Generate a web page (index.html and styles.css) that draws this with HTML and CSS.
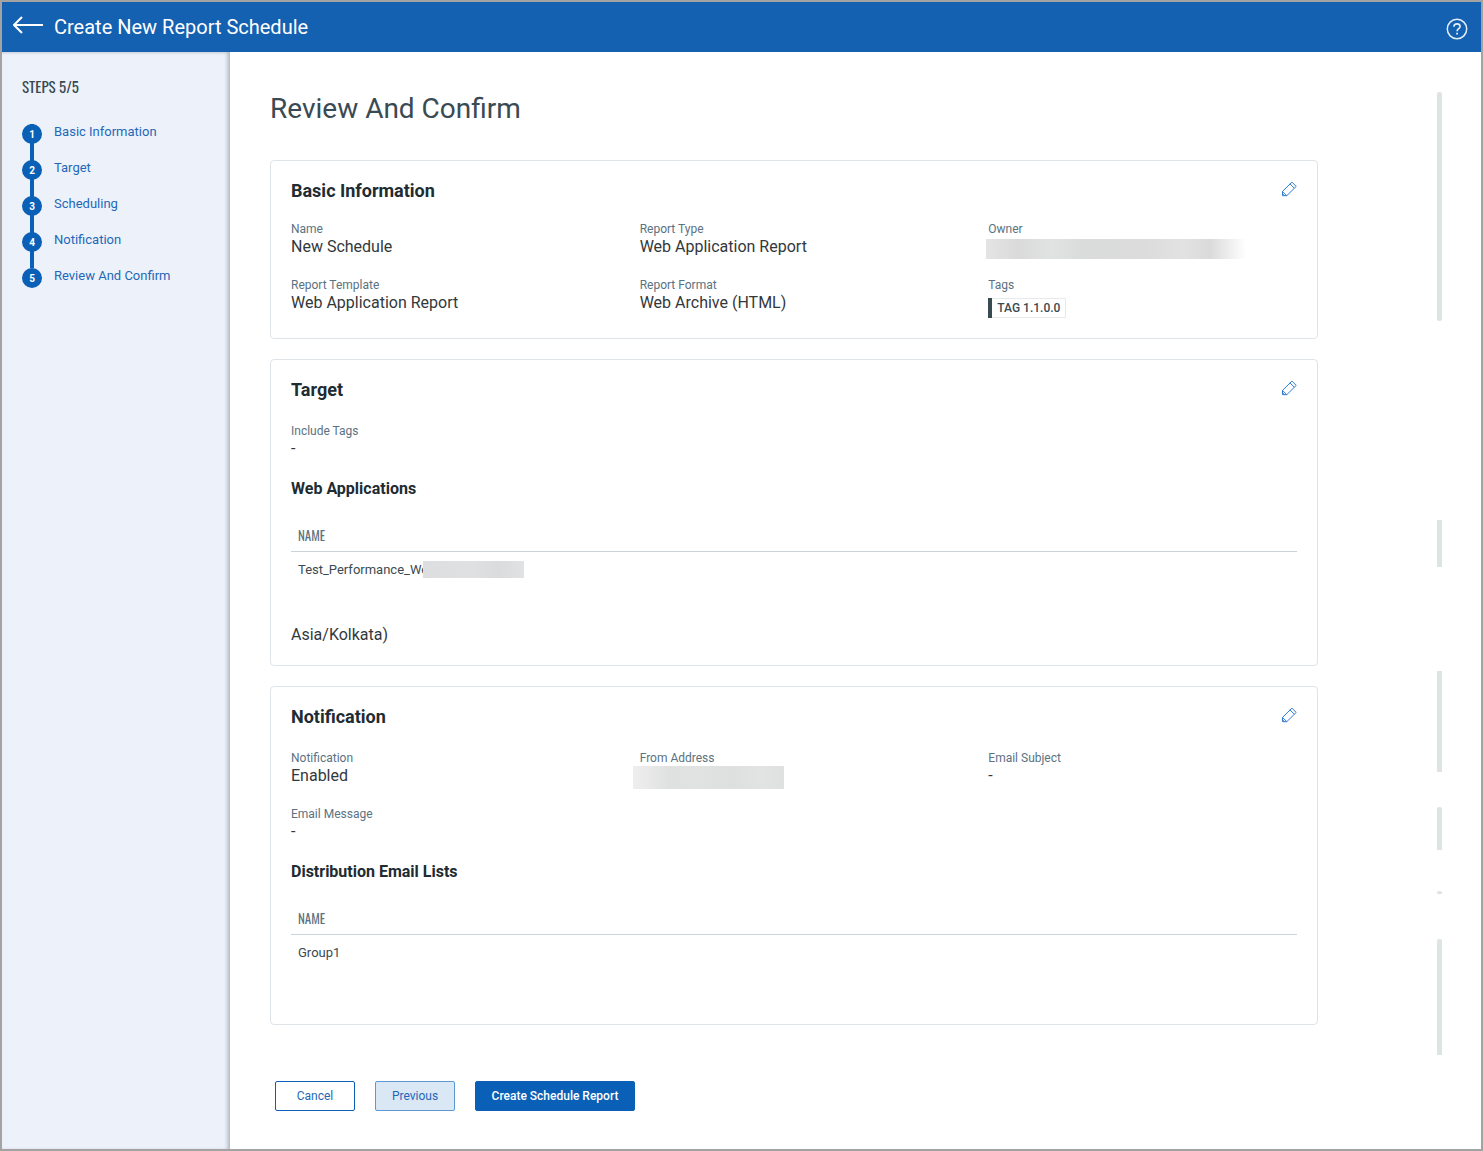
FILE: index.html
```html
<!DOCTYPE html>
<html lang="en">
<head>
<meta charset="utf-8">
<meta name="viewport" content="width=device-width, initial-scale=1">
<title>Create New Report Schedule</title>
<link rel="stylesheet" href="styles.css">
</head>
<body>
<svg class="defs" aria-hidden="true">
  <symbol id="pencil" viewBox="0 0 16 16">
    <path d="M1.5 10.4 10.9 1.1l4.3 4.3-9.4 9.3H1.5zM8.9 2.8l4.3 4.3M1.5 10.4l4.3 4.3M1.5 12.7l2 2" fill="none" stroke="currentColor"/>
  </symbol>
</svg>
<div class="app">
  <header class="topbar">
    <a class="back" href="#" aria-label="Back">
      <svg width="30" height="18" viewBox="0 0 30 18"><path d="M30 9H1M9 1 1 9l8 8" fill="none" stroke="currentColor" stroke-width="2"/></svg>
    </a>
    <h1 class="topbar-title">Create New Report Schedule</h1>
    <button class="help" type="button" aria-label="Help">
      <svg width="22" height="22" viewBox="0 0 22 22" fill="none" stroke="currentColor"><circle cx="11" cy="11" r="9.7" stroke-width="1.5"/><path d="M7.9 8.8c0-1.8 1.3-2.9 3.1-2.9s3.1 1 3.1 2.6c0 2.2-3 2.2-3 4.7" stroke-width="1.6"/><path d="M11.1 14.7v1.9" stroke-width="1.8"/></svg>
    </button>
  </header>

  <div class="body">
    <nav class="sidebar" aria-label="Steps">
      <h2 class="steps-title">STEPS 5/5</h2>
      <ol class="steps">
        <li class="step"><span class="step-num">1</span><a class="step-link" href="#">Basic Information</a></li>
        <li class="step"><span class="step-num">2</span><a class="step-link" href="#">Target</a></li>
        <li class="step"><span class="step-num">3</span><a class="step-link" href="#">Scheduling</a></li>
        <li class="step"><span class="step-num">4</span><a class="step-link" href="#">Notification</a></li>
        <li class="step"><span class="step-num">5</span><a class="step-link" href="#">Review And Confirm</a></li>
      </ol>
    </nav>

    <main class="main">
      <div class="content">
        <h2 class="page-title">Review And Confirm</h2>

        <section class="card">
          <header class="card-head">
            <h3 class="card-title">Basic Information</h3>
            <button class="edit" type="button" aria-label="Edit basic information"><svg width="16" height="16"><use href="#pencil"/></svg></button>
          </header>
          <dl class="fields fields-compact">
            <div><dt>Name</dt><dd>New Schedule</dd></div>
            <div><dt>Report Type</dt><dd>Web Application Report</dd></div>
            <div><dt>Owner</dt><dd class="redacted redacted-owner"></dd></div>
            <div><dt>Report Template</dt><dd>Web Application Report</dd></div>
            <div><dt>Report Format</dt><dd>Web Archive (HTML)</dd></div>
            <div><dt>Tags</dt><dd class="tags"><span class="tag">TAG 1.1.0.0</span></dd></div>
          </dl>
        </section>

        <section class="card">
          <header class="card-head">
            <h3 class="card-title">Target</h3>
            <button class="edit" type="button" aria-label="Edit target"><svg width="16" height="16"><use href="#pencil"/></svg></button>
          </header>
          <dl class="fields">
            <div><dt>Include Tags</dt><dd>-</dd></div>
          </dl>
          <h4 class="table-title">Web Applications</h4>
          <table class="list">
            <thead><tr><th scope="col">NAME</th></tr></thead>
            <tbody><tr><td><div class="masked">Test_Performance_We<span class="redacted redacted-app"></span></div></td></tr></tbody>
          </table>
          <p class="timezone">Asia/Kolkata)</p>
        </section>

        <section class="card">
          <header class="card-head">
            <h3 class="card-title">Notification</h3>
            <button class="edit" type="button" aria-label="Edit notification"><svg width="16" height="16"><use href="#pencil"/></svg></button>
          </header>
          <dl class="fields">
            <div><dt>Notification</dt><dd>Enabled</dd></div>
            <div><dt>From Address</dt><dd class="redacted redacted-from"></dd></div>
            <div><dt>Email Subject</dt><dd>-</dd></div>
            <div><dt>Email Message</dt><dd>-</dd></div>
          </dl>
          <h4 class="table-title">Distribution Email Lists</h4>
          <table class="list list-last">
            <thead><tr><th scope="col">NAME</th></tr></thead>
            <tbody><tr><td>Group1</td></tr></tbody>
          </table>
        </section>

        <div class="actions">
          <button class="btn" type="button">Cancel</button>
          <button class="btn btn-soft" type="button">Previous</button>
          <button class="btn btn-primary" type="button">Create Schedule Report</button>
        </div>
      </div>

      <div class="rail" aria-hidden="true">
        <span class="rail-bar rail-a"></span>
        <span class="rail-bar rail-b"></span>
        <span class="rail-bar rail-c"></span>
        <span class="rail-bar rail-d"></span>
        <span class="rail-bar rail-e"></span>
        <span class="rail-bar rail-f"></span>
      </div>
    </main>
  </div>
</div>
</body>
</html>
```
FILE: styles.css
```css
:root {
  --blue: #0a5fb6;
  --bar: #1561b1;
  --ink: #212b32;
  --slate: #3a4a52;
  --muted: #5b7282;
  --line: #dfe4e8;
  --narrow: Oswald, "Roboto Condensed", "Liberation Sans Narrow", "Liberation Sans", sans-serif;
}

* { box-sizing: border-box; }

body {
  margin: 0;
  font-family: Roboto, "Liberation Sans", sans-serif;
  color: var(--ink);
  background: #fff;
}

h1, h2, h3, h4, p, dl, dd, ol { margin: 0; padding: 0; }
button { font-family: inherit; cursor: pointer; }
a { text-decoration: none; }
svg { display: block; }
.defs { display: none; }

.app {
  display: flex;
  flex-direction: column;
  min-height: 100vh;
  border: 2px solid #a3a3a3;
}

.topbar {
  display: flex;
  align-items: center;
  height: 50px;
  padding: 0 13px 0 11px;
  background: var(--bar);
  color: #fff;
}
.back { color: #fff; margin-bottom: 5px; }
.topbar-title {
  flex: 1;
  margin-left: 11px;
  font-size: 20px;
  line-height: 24px;
  font-weight: 400;
  color: #fff;
}
.help {
  margin-top: 4px;
  padding: 0;
  border: 0;
  background: none;
  color: #e3edf7;
}

.body { display: flex; flex: 1; }

.sidebar {
  width: 228px;
  flex: none;
  padding: 22px 20px;
  background: #edf2fa;
  box-shadow: inset -4px 0 4px -2px #a9b0b8, inset 0 3px 3px -2px #cdd3dc;
}
.steps-title {
  font-family: var(--narrow);
  font-size: 15px;
  line-height: 24px;
  font-weight: 400;
  color: var(--slate);
}
.steps { margin-top: 26px; list-style: none; }
.step {
  display: flex;
  gap: 12px;
  height: 36px;
  background: linear-gradient(var(--blue), var(--blue)) 8px 0 / 4px 100% no-repeat;
}
.step:last-child { background: none; }
.step-num {
  width: 20px;
  height: 20px;
  border-radius: 50%;
  background: var(--blue);
  color: #fff;
  font-size: 10px;
  line-height: 21px;
  font-weight: 700;
  text-align: center;
}
.step-link { font-size: 13px; line-height: 16px; color: #1f68b8; }

.main {
  flex: 1;
  min-width: 0;
  display: flex;
  gap: 119px;
  padding: 40px 39px 38px 40px;
}
.content { flex: 1; min-width: 0; }
.page-title {
  font-size: 28px;
  line-height: 34px;
  font-weight: 400;
  color: var(--slate);
  margin-bottom: 34px;
}

.card {
  padding: 20px;
  border: 1px solid var(--line);
  border-radius: 4px;
}
.card + .card { margin-top: 20px; }
.card-head { display: flex; justify-content: space-between; }
.card-title { font-size: 18px; line-height: 20px; font-weight: 700; }
.edit {
  height: 16px;
  padding: 0;
  border: 0;
  background: none;
  color: #2f7bd0;
}

.fields {
  display: grid;
  grid-template-columns: repeat(3, 1fr);
  gap: 20px 40px;
  margin-top: 23px;
}
.fields-compact { margin-top: 20px; }
.fields dt { font-size: 12px; line-height: 16px; color: var(--muted); }
.fields dd { font-size: 16px; line-height: 20px; color: #33383b; }
.fields .tags { display: flex; padding-top: 5px; }
.tag {
  padding: 1px 6px 1px 9px;
  background: linear-gradient(var(--slate), var(--slate)) 0 0 / 4px 100% no-repeat;
  box-shadow: inset 0 0 0 1px #e6eaec;
  font-size: 12px;
  line-height: 18px;
  font-weight: 500;
  color: var(--slate);
}
.fields .tags { position: relative; }
.tags::before {
  content: "";
  position: absolute;
  left: 0;
  bottom: 0;
  width: 4px;
  height: 20px;
  background: var(--slate);
}

.redacted { display: block; background: #dfe1e1; }
.redacted-owner {
  width: 260px;
  height: 20px;
  margin: 2px 0 -2px -2px;
  background: linear-gradient(90deg, #e4e4e4, #dadada 12%, #e1e2e2 25%, #dadbdb 37%, #dcdcdc 62%, #e2e2e2 76%, #dadada 86%, #fff);
}
.redacted-from {
  width: 151px;
  height: 23px;
  margin: 0 0 -3px -7px;
  background: linear-gradient(90deg, #eee, #e9e9e9 10%, #dfe0e0 24%, #e1e2e2 40%, #dedfdf 65%, #e2e3e3 85%, #dfe0e0);
}
.masked { position: relative; line-height: 17px; }
.redacted-app {
  position: absolute;
  left: 125px;
  top: 0;
  width: 101px;
  height: 17px;
  background: linear-gradient(90deg, #dcdedf, #dfe0e1 50%, #d9dbdc 75%, #e1e2e3);
}

.table-title { margin: 20px 0 21px; font-size: 16px; line-height: 20px; font-weight: 700; }
.list { width: 100%; border-collapse: separate; border-spacing: 0; margin-bottom: 37px; }
.list-last { margin-bottom: 33px; }
.list th {
  height: 32px;
  padding: 0 7px 2px;
  border-bottom: 1px solid #ccd3d9;
  font-family: var(--narrow);
  font-size: 13px;
  font-weight: 400;
  text-align: left;
  color: var(--muted);
}
.list td { height: 36px; padding: 0 7px 1px; font-size: 13px; line-height: 17px; color: var(--slate); }
.timezone { font-size: 16px; line-height: 20px; color: #33383b; }

.actions { display: flex; gap: 20px; margin-top: 56px; padding-left: 5px; }
.btn {
  min-width: 80px;
  height: 30px;
  padding: 0 15px;
  border: 1px solid var(--blue);
  border-radius: 2px;
  background: #fff;
  color: #1f68b8;
  font-size: 12px;
}
.btn-soft { border-color: #5c98d3; background: #dae7f5; }
.btn-primary { min-width: 160px; background: var(--blue); color: #fff; font-weight: 500; }

.rail { width: 5px; flex: none; display: flex; flex-direction: column; }
.rail-bar { background: #dde4e6; border-radius: 2px 2px 0 0; }
.rail-a { height: 229px; border-radius: 2px; }
.rail-b { height: 47px; margin-top: 199px; border-radius: 0; }
.rail-c { height: 101px; margin-top: 104px; border-radius: 0; }
.rail-d { height: 43px; margin-top: 35px; }
.rail-e { height: 3px; margin-top: 41px; }
.rail-f { height: 116px; margin-top: 45px; }
```
